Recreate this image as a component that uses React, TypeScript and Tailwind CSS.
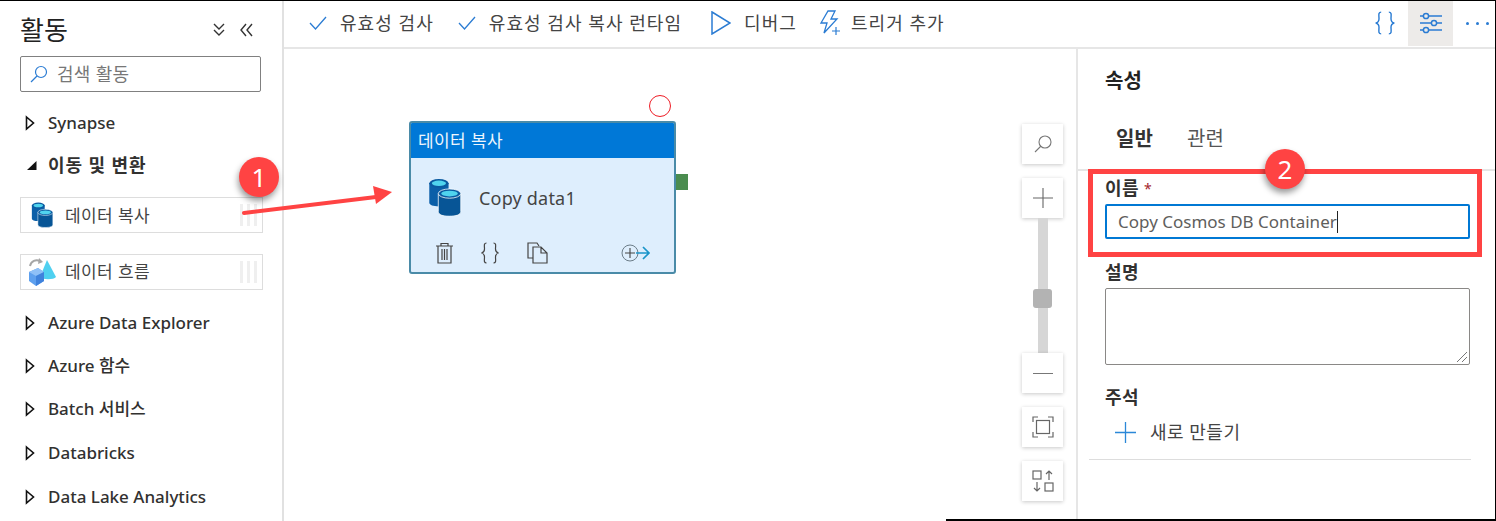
import React from "react";

const Tri = () => (
  <svg width="10" height="16" viewBox="0 0 10 16" className="shrink-0">
    <path d="M1.5 2 L8.5 8 L1.5 14 Z" fill="white" stroke="#111" strokeWidth="1.6" />
  </svg>
);

const Braces = ({ color, w, h, sw }: { color: string; w: number; h: number; sw: number }) => (
  <svg width={w} height={h} viewBox="0 0 20 22" fill="none" stroke={color} strokeWidth={sw}>
    <path d="M6.5 1 C3.5 1 4.5 4 4.5 7 C4.5 9.5 3.5 10.5 1.5 11 C3.5 11.5 4.5 12.5 4.5 15 C4.5 18 3.5 21 6.5 21" />
    <path d="M13.5 1 C16.5 1 15.5 4 15.5 7 C15.5 9.5 16.5 10.5 18.5 11 C16.5 11.5 15.5 12.5 15.5 15 C15.5 18 16.5 21 13.5 21" />
  </svg>
);

const Cylinders = ({ size = 28 }: { size?: number }) => (
  <svg width={size} height={size * 1.08} viewBox="0 0 28 30">
    <path d="M1 4 V19 C1 21 4 22 8.5 22 C13 22 16 21 16 19 V4 Z" fill="#0b5fa8" />
    <ellipse cx="8.5" cy="4" rx="7.5" ry="3.4" fill="#0a5aa0" />
    <ellipse cx="8.5" cy="4" rx="5.5" ry="2.1" fill="#50d4ee" />
    <path d="M8 12 V26 C8 28.5 11.5 29.6 16.5 29.6 C22 29.6 25.5 28.5 25.5 26 V12 Z" fill="#075596" stroke="white" strokeWidth="0.6" />
    <ellipse cx="16.75" cy="12" rx="8.75" ry="3.6" fill="#0a5aa0" stroke="white" strokeWidth="0.6" />
    <ellipse cx="16.75" cy="12" rx="6.5" ry="2.2" fill="#50d4ee" />
  </svg>
);

const FlowIcon = () => (
  <svg width="30" height="30" viewBox="0 0 30 30">
    <path d="M20 3 L29 20 C27 23 15 23 13 20 Z" fill="#4fd0f0" />
    <path d="M2 15 L11 11 L17 15 L17 24 L9 29 L2 24 Z" fill="#5ea0ee" />
    <path d="M2 15 L9 19 L17 15 L11 11 Z" fill="#8fc0f7" />
    <path d="M9 19 V29 L17 24 V15 Z" fill="#3f82dc" />
    <path d="M3 9 C4 4 9 2 13 4" fill="none" stroke="#a6a6a6" strokeWidth="2" />
    <path d="M12 1 L16 5 L11 7 Z" fill="#a6a6a6" />
  </svg>
);

const Grip = () => (
  <div className="ml-auto mr-[5px] flex gap-[4px]">
    <div className="h-[22px] w-[3px] bg-[#efefef]" />
    <div className="h-[22px] w-[3px] bg-[#efefef]" />
    <div className="h-[22px] w-[3px] bg-[#efefef]" />
  </div>
);

const Category = ({ label, className }: { label: string; className: string }) => (
  <div className={`flex items-center ${className}`}>
    <div className="w-[22px] pl-[5px]">
      <Tri />
    </div>
    <span className="ml-[6px] text-[17px] font-medium leading-[22px] text-[#323130]">{label}</span>
  </div>
);

const Check = () => (
  <svg width="18" height="14" viewBox="0 0 18 14" className="shrink-0">
    <path d="M1 7 L6.5 13 L17 1" fill="none" stroke="#2b7cd3" strokeWidth="1.3" />
  </svg>
);

const ZoomBtn = ({ children, className = "" }: { children: React.ReactNode; className?: string }) => (
  <div className={`relative flex h-[40px] w-[41px] items-center justify-center bg-white shadow-[0_1px_4px_rgba(0,0,0,0.22)] ${className}`}>
    {children}
  </div>
);

const Label = ({ children }: { children: React.ReactNode }) => (
  <div className="text-[18px] font-semibold leading-[22px] tracking-[0.4px] text-[#323130]">{children}</div>
);

export default function App() {
  return (
    <div className="relative flex h-[521px] w-[1496px] overflow-hidden border-t border-t-black bg-white font-['Noto_Sans','Noto_Sans_CJK_KR',sans-serif]">
      {/* Sidebar */}
      <aside className="flex w-[284px] shrink-0 flex-col border-r-2 border-r-[#e1e1e1] pl-[20px] pt-[12px]">
        <div className="flex h-[34px] items-center">
          <h1 className="w-[48px] whitespace-nowrap text-[26px] font-normal leading-[34px] text-[#222]">활동</h1>
          <svg width="14" height="14" viewBox="0 0 14 14" className="ml-[144px]">
            <path d="M2 1 L7 6 L12 1 M2 7 L7 12 L12 7" fill="none" stroke="#333" strokeWidth="1.4" />
          </svg>
          <svg width="14" height="14" viewBox="0 0 14 14" className="ml-[13px]">
            <path d="M7 1 L2 7 L7 13 M13 1 L8 7 L13 13" fill="none" stroke="#333" strokeWidth="1.4" />
          </svg>
        </div>
        <div className="mt-[9px] flex h-[36px] w-[241px] items-center rounded-[2px] border border-[#808080] pl-[8px]">
          <svg width="20" height="18" viewBox="0 0 20 18">
            <circle cx="12" cy="7" r="5.5" fill="none" stroke="#2b7cd3" strokeWidth="1.2" />
            <path d="M8 11 L2 17" stroke="#2b7cd3" strokeWidth="1.2" />
          </svg>
          <span className="ml-[8px] text-[18px] leading-[22px] tracking-[0.3px] text-[#777]">검색 활동</span>
        </div>
        <Category label="Synapse" className="mt-[20px]" />
        <div className="mt-[20px] flex items-center">
          <div className="w-[28px] pl-[6px]">
            <svg width="11" height="11" viewBox="0 0 11 11">
              <path d="M10.5 1 V10 H1 Z" fill="#111" />
            </svg>
          </div>
          <span className="text-[18px] font-bold leading-[22px] tracking-[0.9px] text-[#323130]">이동 및 변환</span>
        </div>
        <div className="mt-[21px] flex h-[36px] w-[243px] items-center border border-[#dddddd] pl-[10px]">
          <Cylinders size={24} />
          <span className="ml-[10px] pt-[1px] text-[17px] leading-[22px] tracking-[0.4px] text-[#444]">데이터 복사</span>
          <Grip />
        </div>
        <div className="mt-[21px] flex h-[36px] w-[243px] items-center border border-[#dddddd] pl-[6px]">
          <FlowIcon />
          <span className="ml-[8px] text-[17px] leading-[22px] tracking-[0.4px] text-[#444]">데이터 흐름</span>
          <Grip />
        </div>
        <Category label="Azure Data Explorer" className="mt-[22px]" />
        <Category label="Azure 함수" className="mt-[21px]" />
        <Category label="Batch 서비스" className="mt-[21px]" />
        <Category label="Databricks" className="mt-[22px]" />
        <Category label="Data Lake Analytics" className="mt-[22px]" />
      </aside>

      {/* Main */}
      <main className="flex min-w-0 flex-1 flex-col">
        <div className="flex h-[48px] shrink-0 items-center border-b-2 border-b-[#e6e6e6] pb-[2px] pl-[25px] text-[18px] leading-[22px] tracking-[1.05px] text-[#444]">
          <Check />
          <span className="ml-[13px]">유효성 검사</span>
          <div className="ml-[24px]"><Check /></div>
          <span className="ml-[13px]">유효성 검사 복사 런타임</span>
          <svg width="20" height="24" viewBox="0 0 20 24" className="ml-[29px]">
            <path d="M1 1 L19 12 L1 23 Z" fill="none" stroke="#2b7cd3" strokeWidth="1.5" />
          </svg>
          <span className="ml-[13px]">디버그</span>
          <svg width="22" height="26" viewBox="0 0 22 26" className="ml-[22px]">
            <path d="M9 1 H16 L12 9 H18 L5 23 L8 13 H2 Z" fill="none" stroke="#2b7cd3" strokeWidth="1.3" />
            <path d="M17 17 V25 M13 21 H21" stroke="#2b7cd3" strokeWidth="1.2" />
          </svg>
          <span className="ml-[10px]">트리거 추가</span>
          <div className="ml-auto flex h-full items-center">
            <div className="mr-[12px]">
              <Braces color="#2b7cd3" w={22} h={24} sw={1.3} />
            </div>
            <div className="flex h-[46px] w-[45px] items-center justify-center bg-[#edebe9]">
              <svg width="24" height="22" viewBox="0 0 24 22">
                <g fill="none" stroke="#2b7cd3" strokeWidth="1.5">
                  <path d="M1 4 H4 M10 4 H23 M1 11 H12 M18 11 H23 M1 18 H4 M10 18 H23" />
                  <circle cx="7" cy="4" r="2.6" />
                  <circle cx="15" cy="11" r="2.6" />
                  <circle cx="7" cy="18" r="2.6" />
                </g>
              </svg>
            </div>
            <div className="ml-[13px] mr-[7px] flex gap-[7px]">
              <div className="h-[3px] w-[3px] rounded-full bg-[#2b7cd3]" />
              <div className="h-[3px] w-[3px] rounded-full bg-[#2b7cd3]" />
              <div className="h-[3px] w-[3px] rounded-full bg-[#2b7cd3]" />
            </div>
          </div>
        </div>

        <div className="flex min-h-0 flex-1">
          {/* Canvas */}
          <div className="relative min-w-0 flex-1 bg-white">
            {/* Node */}
            <div className="absolute left-[125px] top-[72px] flex h-[153px] w-[267px] flex-col overflow-hidden rounded-[3px] border-2 border-[#4a8ba8] bg-[#deeefd]">
              <div className="flex h-[35px] shrink-0 items-center bg-[#0078d7] pl-[7px] pt-[1px] text-[17px] leading-[22px] tracking-[0.4px] text-[#eef6fd]">데이터 복사</div>
              <div className="mt-[20px] flex h-[38px] shrink-0 items-center pl-[17px]">
                <Cylinders size={36} />
                <span className="ml-[15px] pt-[2px] text-[18px] leading-[24px] tracking-[0.2px] text-[#444]">Copy data1</span>
              </div>
              <div className="mt-[26px] flex items-center pl-[24px]">
                <svg width="19" height="22" viewBox="0 0 19 22">
                  <g fill="none" stroke="#444" strokeWidth="1.2">
                    <path d="M1 4 H18 M6 4 V1.5 H13 V4 M3 4 V21 H16 V4 M7 7 V18 M9.5 7 V18 M12 7 V18" />
                  </g>
                </svg>
                <div className="ml-[26px]">
                  <Braces color="#444" w={20} h={22} sw={1.2} />
                </div>
                <svg width="21" height="22" viewBox="0 0 21 22" className="ml-[27px]">
                  <g fill="none" stroke="#444" strokeWidth="1.2">
                    <path d="M6 16 H1 V1 H10 L12 4" />
                    <path d="M6 5 H14 L20 11 V21 H6 Z M14 5 V11 H20" fill="#deeefd" />
                  </g>
                </svg>
                <svg width="30" height="20" viewBox="0 0 30 20" className="ml-[73px]">
                  <circle cx="9" cy="10" r="8" fill="none" stroke="#6b7c88" strokeWidth="1" />
                  <path d="M4 10 H14 M9 5 V15" stroke="#444" strokeWidth="1.1" />
                  <path d="M15 10 H28 M22 4 L28 10 L22 16" fill="none" stroke="#1b95c9" strokeWidth="1.7" />
                </svg>
              </div>
            </div>
            <div className="absolute left-[392px] top-[125px] h-[16px] w-[12px] bg-[#4a8c4f]" />
            <div className="absolute left-[365px] top-[46px] h-[22px] w-[22px] rounded-full border-[1.5px] border-[#ee1c25] bg-white" />

            {/* Zoom controls */}
            <div className="absolute left-[738px] top-[75px] flex flex-col items-center">
              <ZoomBtn>
                <svg width="20" height="20" viewBox="0 0 20 20">
                  <circle cx="12" cy="8" r="6" fill="none" stroke="#777" strokeWidth="1.1" />
                  <path d="M8 12 L2 18" stroke="#777" strokeWidth="1.1" />
                </svg>
              </ZoomBtn>
              <ZoomBtn className="mt-[14px]">
                <svg width="20" height="20" viewBox="0 0 20 20">
                  <path d="M0 10 H20 M10 0 V20" stroke="#666" strokeWidth="1.1" />
                </svg>
              </ZoomBtn>
              <div className="relative h-[135px] w-[10px] bg-[#d6d6d6]">
                <div className="absolute left-[-5px] top-[71px] h-[19px] w-[19px] rounded-[3px] bg-[#b3b3b3]" />
              </div>
              <ZoomBtn>
                <div className="h-px w-[20px] bg-[#777]" />
              </ZoomBtn>
              <ZoomBtn className="mt-[14px]">
                <svg width="22" height="22" viewBox="0 0 22 22" fill="none" stroke="#666" strokeWidth="1.2">
                  <path d="M1 6 V1 H6 M16 1 H21 V6 M21 16 V21 H16 M6 21 H1 V16" />
                  <rect x="4.5" y="4.5" width="13" height="13" />
                </svg>
              </ZoomBtn>
              <ZoomBtn className="mt-[14px]">
                <svg width="22" height="22" viewBox="0 0 22 22" fill="none" stroke="#666" strokeWidth="1.2">
                  <rect x="1" y="1" width="8" height="8" />
                  <rect x="13" y="13" width="8" height="8" />
                  <path d="M17 10 V1 M14 4 L17 1 L20 4 M5 12 V21 M2 18 L5 21 L8 18" />
                </svg>
              </ZoomBtn>
            </div>
          </div>

          {/* Properties */}
          <section className="flex w-[420px] shrink-0 flex-col border-l-2 border-l-[#e6e6e6]">
            <h2 className="ml-[27px] mt-[20px] text-[20px] font-bold leading-[24px] text-[#222]">속성</h2>
            <div className="mt-[31px] flex h-[47px] border-b-2 border-b-[#e6e6e6] pl-[37px]">
              <div className="relative h-[47px] w-[39px] pt-[3px] text-center text-[20px] font-bold leading-[24px] text-[#333]">
                일반
                <div className="absolute bottom-[-2px] left-0 h-[3px] w-full bg-[#0078d4]" />
              </div>
              <div className="ml-[33px] pt-[3px] text-[20px] leading-[24px] text-[#555]">관련</div>
            </div>
            <div className="ml-[27px] mt-[6px] w-[365px]">
              <div className="flex items-center">
                <Label>이름</Label>
                <span className="ml-[5px] mt-[2px] text-[14px] leading-[14px] text-[#a4262c]">*</span>
              </div>
              <div className="mt-[5px] flex h-[35px] items-center rounded-[2px] border-2 border-[#0078d4] pl-[11px] text-[17px] leading-[22px] text-[#605e5c]">
                <span className="pt-[1px]">Copy Cosmos DB Container</span>
                <div className="h-[22px] w-px bg-[#222]" />
              </div>
              <div className="mt-[22px]">
                <Label>설명</Label>
              </div>
              <div className="relative mt-[5px] h-[77px] rounded-[2px] border border-[#8a8886]">
                <svg width="12" height="12" viewBox="0 0 12 12" className="absolute bottom-[1px] right-[1px]">
                  <path d="M1 11 L11 1 M6 11 L11 6" stroke="#777" strokeWidth="1" />
                </svg>
              </div>
              <div className="mt-[21px]">
                <Label>주석</Label>
              </div>
              <div className="mt-[13px] flex items-center pl-[10px]">
                <svg width="21" height="21" viewBox="0 0 21 21">
                  <path d="M0 10.5 H21 M10.5 0 V21" stroke="#2b88d8" strokeWidth="1.3" />
                </svg>
                <span className="ml-[14px] text-[18px] leading-[22px] tracking-[0.5px] text-[#444]">새로 만들기</span>
              </div>
            </div>
            <div className="ml-[11px] mt-[16px] h-[1px] w-[382px] bg-[#ddd]" />
          </section>
        </div>
      </main>

      {/* Annotations */}
      <div className="absolute left-[1088px] top-[168px] h-[88px] w-[394px] border-[5px] border-[#ff4343]" />
      <svg width="170" height="40" viewBox="0 0 170 40" className="absolute left-[236px] top-[180px]">
        <path d="M8 32 L140 16" stroke="#ff4343" strokeWidth="4" strokeLinecap="round" />
        <path d="M137 5 L156 11 L140 23 Z" fill="#ff4343" />
      </svg>
      <div className="absolute left-[239px] top-[156px] flex h-[40px] w-[40px] items-center justify-center rounded-full bg-[#ff4343] text-[26px] leading-none text-white shadow-[-1px_4px_6px_rgba(0,0,0,0.4)]">
        1
      </div>
      <div className="absolute left-[1265px] top-[148px] flex h-[40px] w-[40px] items-center justify-center rounded-full bg-[#ff4343] text-[26px] leading-none text-white shadow-[-1px_4px_6px_rgba(0,0,0,0.4)]">
        2
      </div>
      <div className="absolute bottom-0 left-[946px] right-0 h-[2px] bg-black" />
      <div className="absolute bottom-0 right-0 top-0 w-px bg-black" />
    </div>
  );
}
